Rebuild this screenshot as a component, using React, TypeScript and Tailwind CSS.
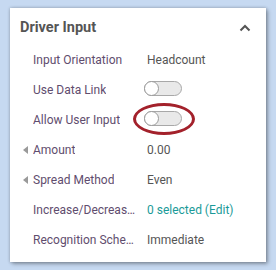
import React from 'react';

const rows: { label: string; value?: string; toggle?: boolean; circled?: boolean; caret?: boolean; link?: boolean }[] = [
  { label: 'Input Orientation', value: 'Headcount' },
  { label: 'Use Data Link', toggle: true },
  { label: 'Allow User Input', toggle: true, circled: true },
  { label: 'Amount', value: '0.00', caret: true },
  { label: 'Spread Method', value: 'Even', caret: true },
  { label: 'Increase/Decrease Rules', value: '0 selected (Edit)', link: true },
  { label: 'Recognition Schedule', value: 'Immediate' },
];

function Toggle() {
  return (
    <div className="w-[38px] h-[15px] rounded-full bg-[#e9e9e9] border border-[#a8a8a8] relative">
      <div className="absolute -left-px -top-px w-[15px] h-[15px] rounded-full bg-white border border-[#9a9a9a]" />
    </div>
  );
}

export default function App() {
  return (
    <div className="w-[276px] h-[270px] bg-[#c6d9f1] pt-2 pl-[10px] font-['Roboto',sans-serif]">
      <div className="w-[256px] h-[254px] bg-white shadow-[0_0_3px_rgba(0,0,0,0.25),2px_2px_4px_rgba(0,0,0,0.3)]">
        <div className="flex items-center justify-between pl-[10px] pr-[15px] h-[38px] pt-[2px]">
          <span className="text-[14.5px] font-bold text-[#555]">Driver Input</span>
          <svg width="12" height="8" viewBox="0 0 12 8">
            <path d="M1.5 6.5 L6 2 L10.5 6.5" fill="none" stroke="#555" strokeWidth="2" />
          </svg>
        </div>
        <div className="flex flex-col -mt-px">
          {rows.map((r) => (
            <div key={r.label} className="flex items-center h-[30px] text-[12px]">
              <div className="w-[127px] flex items-center pl-[13px] shrink-0 min-w-0">
                <span className="w-[10px] shrink-0 flex items-center">
                  {r.caret && (
                    <svg width="5" height="8" viewBox="0 0 5 8">
                      <path d="M5 0 L0 4 L5 8 Z" fill="#999" />
                    </svg>
                  )}
                </span>
                <span className="text-[#5f4d6e] truncate min-w-0">{r.label}</span>
              </div>
              <div className="pl-[10px] min-w-0">
                {r.toggle ? (
                  <div className="relative -ml-[3px] -mt-[4px]">
                    <Toggle />
                    {r.circled && (
                      <div className="absolute left-[-11px] top-[-8px] w-[62px] h-[32px] rounded-[50%] border-[3px] border-[#a3212b]" />
                    )}
                  </div>
                ) : (
                  <span className={r.link ? 'text-[#1a9a98] whitespace-nowrap' : 'text-[#555] whitespace-nowrap'}>{r.value}</span>
                )}
              </div>
            </div>
          ))}
        </div>
      </div>
    </div>
  );
}
